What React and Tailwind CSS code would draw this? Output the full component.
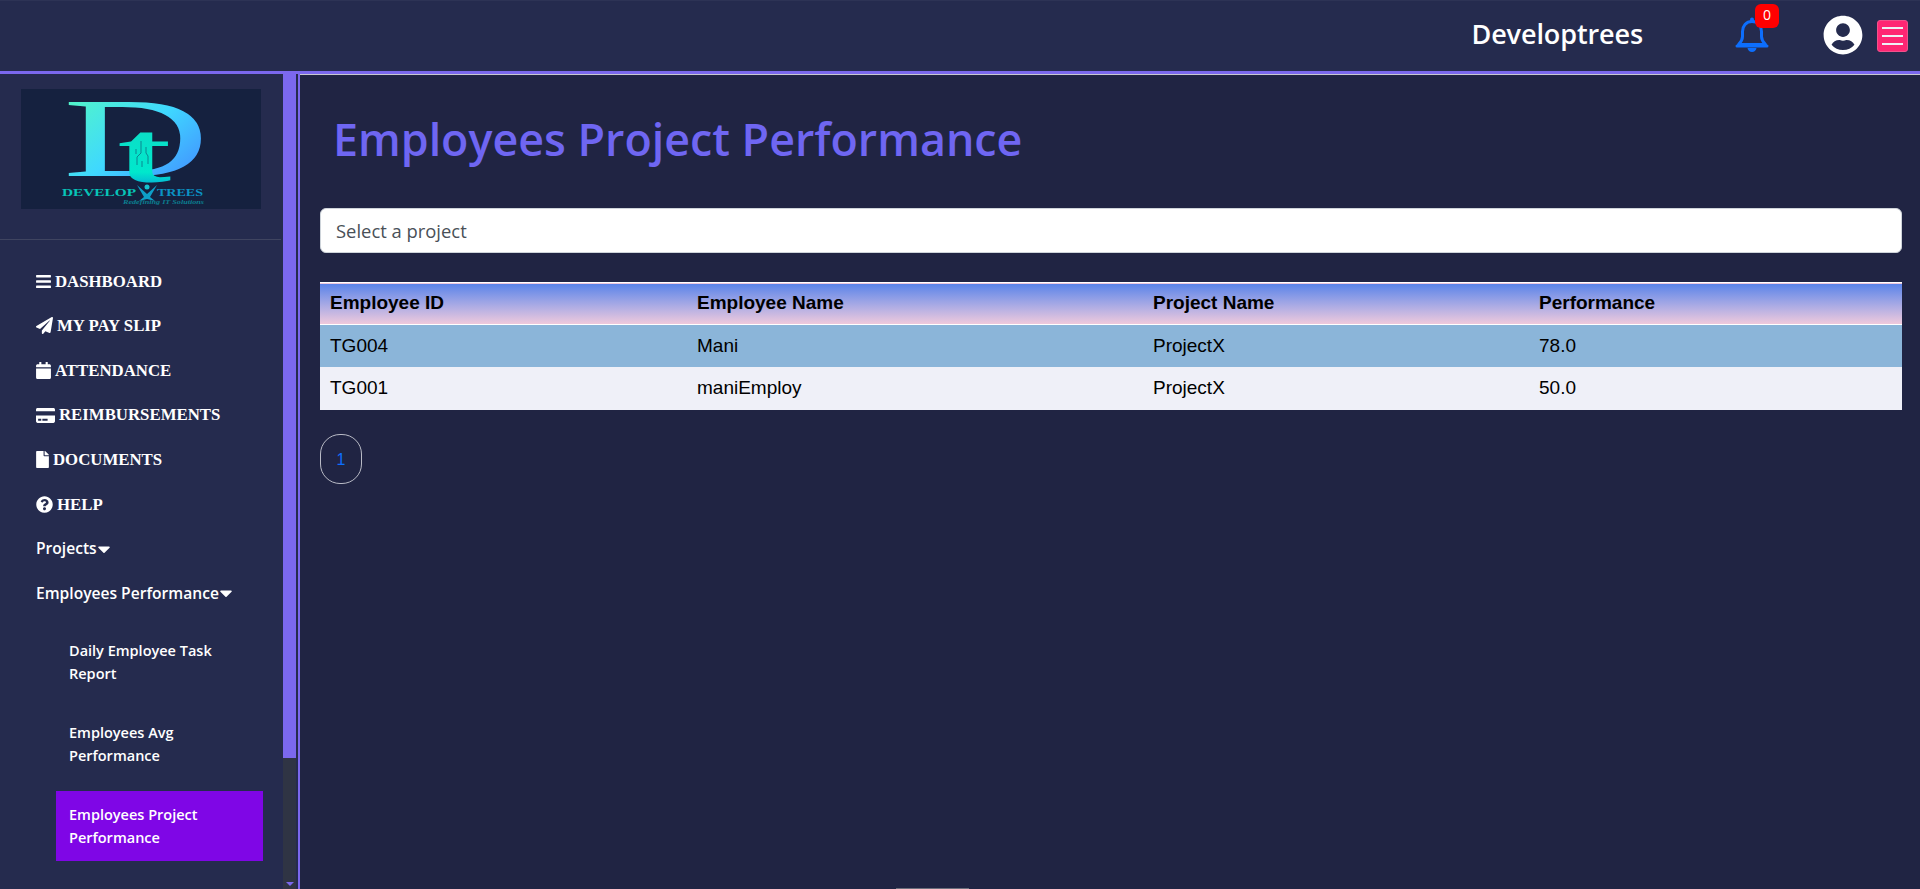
import React from 'react';
import { FaBars, FaPaperPlane, FaCalendar, FaCreditCard, FaFile, FaQuestionCircle, FaCaretDown, FaUserCircle } from 'react-icons/fa';

const navItems = [
  { label: 'DASHBOARD', Icon: FaBars, size: 'w-[15px] h-[17px]' },
  { label: 'MY PAY SLIP', Icon: FaPaperPlane, size: 'w-[17px] h-[17px]' },
  { label: 'ATTENDANCE', Icon: FaCalendar, size: 'w-[15px] h-[17px]' },
  { label: 'REIMBURSEMENTS', Icon: FaCreditCard, size: 'w-[19px] h-[17px]' },
  { label: 'DOCUMENTS', Icon: FaFile, size: 'w-[13px] h-[17px]' },
  { label: 'HELP', Icon: FaQuestionCircle, size: 'w-[17px] h-[17px]' },
];

const subItems = [
  { lines: ['Daily Employee Task', 'Report'], active: false },
  { lines: ['Employees Avg', 'Performance'], active: false },
  { lines: ['Employees Project', 'Performance'], active: true },
];

const rows = [
  { id: 'TG004', name: 'Mani', project: 'ProjectX', score: '78.0', bg: 'bg-[#8bb5d9]' },
  { id: 'TG001', name: 'maniEmploy', project: 'ProjectX', score: '50.0', bg: 'bg-[#eff0f8]' },
];

const Logo = () => (
  <svg width="240" height="120" viewBox="0 0 240 120" className="block">
    <defs>
      <linearGradient id="dGrad" x1="0" y1="0" x2="1" y2="1">
        <stop offset="0" stopColor="#57ffb8" />
        <stop offset="0.5" stopColor="#3fd8ff" />
        <stop offset="1" stopColor="#4476ff" />
      </linearGradient>
      <linearGradient id="tGrad" x1="0" y1="0" x2="0" y2="1">
        <stop offset="0" stopColor="#12d8c4" />
        <stop offset="0.7" stopColor="#00e8cc" />
        <stop offset="1" stopColor="#0a6fe0" />
      </linearGradient>
    </defs>
    <rect width="240" height="120" fill="#15213f" />
    <text x="42" y="87" fontFamily="'Liberation Serif', serif" fontSize="113" fill="url(#dGrad)" textLength="146" lengthAdjust="spacingAndGlyphs">D</text>
    <text x="96" y="93" fontFamily="'Liberation Serif', serif" fontSize="86" fontWeight="700" fill="url(#tGrad)" textLength="54" lengthAdjust="spacingAndGlyphs">t</text>
    {/* circuit traces on the t */}
    <path d="M120 52v12l-4 4v8M125 58v6l2 3v8M115 60v5M121 72v6" stroke="#0f5f78" strokeWidth="0.7" fill="none" />
    <text x="41" y="107" fontFamily="'Liberation Serif', serif" fontSize="10" fontWeight="700" fill="#07c4b8" textLength="74" lengthAdjust="spacingAndGlyphs">DEVELOP</text>
    <text x="136" y="107" fontFamily="'Liberation Serif', serif" fontSize="10" fontWeight="700" fill="#0b93c4" textLength="46" lengthAdjust="spacingAndGlyphs">TREES</text>
    <circle cx="126" cy="98" r="2.500" fill="#17c3d0" />
    <path d="M116 96 L126 105 L136 96 L129 108 L134 112 L126 110 L118 112 L123 108 Z" fill="#0e9fc8" />
    <text x="102" y="115" fontFamily="'Liberation Serif', serif" fontSize="5.5" fontStyle="italic" fontWeight="700" fill="#0b7f90" textLength="81" lengthAdjust="spacingAndGlyphs">Redefining IT Solutions</text>
  </svg>
);

const BellIcon = () => (
  <svg width="34" height="37" viewBox="0 0 34 37" fill="none" className="block">
    <path d="M17 4.500c-6 0-9.500 4.500-9.500 10v5c0 3-1.500 5.500-4 8h27c-2.500-2.500-4-5-4-8v-5c0-5.500-3.500-10-9.500-10z" stroke="#0d6efd" strokeWidth="3" strokeLinejoin="round" />
    <path d="M15 4V2.500a2 2 0 0 1 4 0V4z" fill="#0d6efd" />
    <path d="M12.500 31h9c-.5 2.500-2.200 4-4.500 4s-4-1.500-4.500-4z" fill="#0d6efd" />
    <path d="M2 29h30" stroke="#0d6efd" strokeWidth="3" strokeLinecap="round" />
  </svg>
);

const App = () => {
  return (
    <div className="h-screen flex flex-col overflow-hidden bg-[#202443] font-['Open_Sans',sans-serif] relative">
      {/* Top bar */}
      <header className="h-[74px] shrink-0 bg-[#252b4e] border-t border-[#2d3355] border-b-[3px] border-b-[#7b68ee] flex items-center justify-end">
        <span className="text-white font-semibold text-[27px] tracking-[-0.1px] mr-[92px] -mt-[4px]">Developtrees</span>
        <div className="relative mr-[54px] mt-[-1px]">
          <BellIcon />
          <span className="absolute -top-[13px] left-[20px] w-[24px] h-[24px] bg-[#ff0000] rounded-[6px] text-white text-[14px] leading-[22px] text-center">0</span>
        </div>
        <FaUserCircle className="text-white text-[40px] mr-[14px] -mt-[2px]" />
        <div className="w-[31px] h-[32px] mr-[12px] rounded-[3px] bg-[#ff2673] border border-[#f0528c] flex flex-col items-center justify-center gap-[6px]">
          <span className="block w-[21px] h-[2px] bg-[#eef0f6]" />
          <span className="block w-[21px] h-[2px] bg-[#eef0f6]" />
          <span className="block w-[21px] h-[2px] bg-[#eef0f6]" />
        </div>
      </header>

      <div className="flex flex-1 min-h-0">
        {/* Sidebar */}
        <aside className="w-[300px] shrink-0 flex bg-[#252b4e] border-r-2 border-[#7b68ee]">
          <div className="w-[283px] shrink-0">
            <div className="pl-[21px] pt-[15px] pb-[30px] border-b border-[#3f4460] mr-[2px]">
              <Logo />
            </div>
            <nav className="pl-[36px] pt-[19px]">
              {navItems.map(({ label, Icon, size }) => (
                <div key={label} className="h-[44.6px] flex items-center gap-[4px] text-white font-['Liberation_Serif',serif] font-bold text-[16.8px]">
                  <Icon className={size} />
                  <span>{label}</span>
                </div>
              ))}
              <div className="h-[44.600px] flex items-center text-white text-[15.6px] font-semibold">
                Projects<FaCaretDown className="text-[20px] -ml-[3px]" />
              </div>
              <div className="h-[44.600px] flex items-center text-white text-[15.6px] font-semibold">
                Employees Performance<FaCaretDown className="text-[20px] -ml-[3px]" />
              </div>
            </nav>
            <div className="ml-[56px] w-[207px] mt-[11px] flex flex-col gap-[12px]">
              {subItems.map((item) => (
                <div key={item.lines[0]} className={`h-[70px] pl-[13px] flex flex-col justify-center text-white text-[14.5px] font-semibold leading-[23px] ${item.active ? 'bg-[#7f06e6]' : ''}`}>
                  {item.lines.map((line) => <span key={line}>{line}</span>)}
                </div>
              ))}
            </div>
          </div>
          {/* Scrollbar */}
          <div className="w-[13px] shrink-0 bg-[#2f3444] flex flex-col justify-between">
            <div className="h-[684px] bg-[#7b68ee]" />
            <div className="flex justify-center pb-[3px]">
              <div className="w-0 h-0 border-l-[4px] border-r-[4px] border-t-[4px] border-l-transparent border-r-transparent border-t-[#7b68ee]" />
            </div>
          </div>
        </aside>

        {/* Content */}
        <main className="flex-1 min-w-0 pl-[20px] pr-[18px] border-t-[1px] border-[#c9c9d2]">
          <h1 className="text-[#6f66f2] text-[44.8px] font-semibold leading-[60px] ml-[13px] mt-[34px] mb-[39px]">Employees Project Performance</h1>
          <div className="h-[45px] bg-white rounded-[6px] border border-[#ced4da] pl-[15px] flex items-center text-[#495057] text-[18.4px]">
            Select a project
          </div>
          <table className="w-full mt-[29px] border-collapse table-fixed font-['Liberation_Sans',sans-serif] text-[19px] text-black">
            <thead>
              <tr className="h-[42px] border-y border-white bg-gradient-to-b from-[#5a83e8] to-[#efc9dc] text-left">
                <th className="w-[367px] pl-[10px] font-bold">Employee ID</th>
                <th className="w-[456px] pl-[10px] font-bold">Employee Name</th>
                <th className="w-[386px] pl-[10px] font-bold">Project Name</th>
                <th className="pl-[10px] font-bold">Performance</th>
              </tr>
            </thead>
            <tbody>
              {rows.map((row) => (
                <tr key={row.id} className={`h-[42.500px] ${row.bg}`}>
                  <td className="pl-[10px]">{row.id}</td>
                  <td className="pl-[10px]">{row.name}</td>
                  <td className="pl-[10px]">{row.project}</td>
                  <td className="pl-[10px]">{row.score}</td>
                </tr>
              ))}
            </tbody>
          </table>
          <div className="mt-[24px] w-[42px] h-[50px] pt-[2px] rounded-[20px] border border-[#b9bbc6] flex items-center justify-center text-[#0d6efd] text-[16px] font-['Liberation_Sans',sans-serif]">
            1
          </div>
        </main>
      </div>
      <div className="absolute bottom-0 left-[896px] w-[73px] h-[1px] bg-[#6b6e7c]" />
    </div>
  );
};

export default App;
